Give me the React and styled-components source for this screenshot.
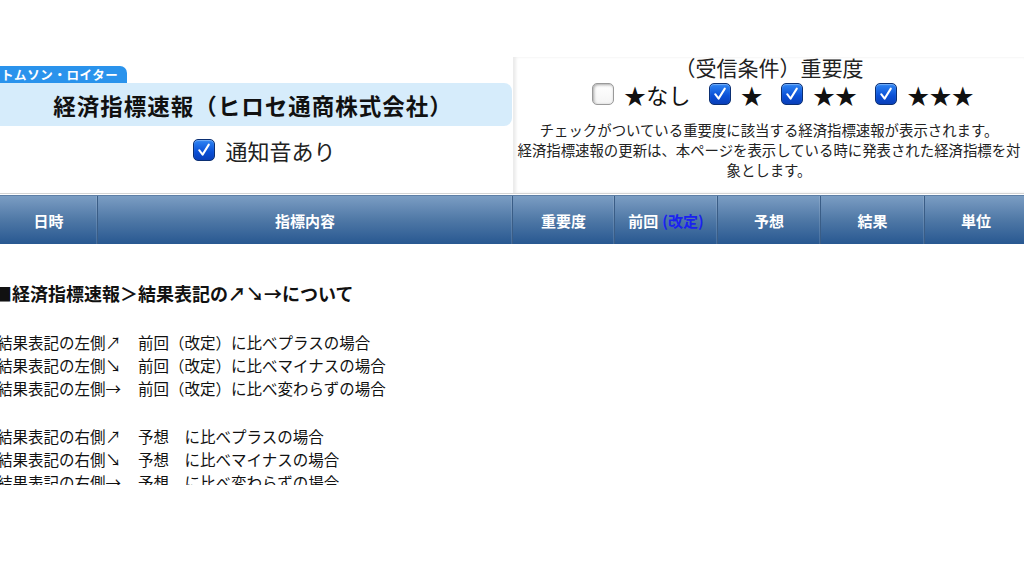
import React from 'react'
import styled, { createGlobalStyle } from 'styled-components'

const GlobalStyle = createGlobalStyle`
  html, body {
    margin: 0;
    padding: 0;
    background: #ffffff;
  }
  body {
    font-family: "Noto Sans CJK JP", "Noto Sans", sans-serif;
    color: #111;
  }
`;

const Check = ({ checked }) => (
  <CheckBox checked={checked}>
    {checked && (
      <svg width="16" height="16" viewBox="0 0 16 16">
        <path d="M3.2 8.2 L6.6 12.6 L12.8 2.6" fill="none" stroke="#fff" strokeWidth="2" strokeLinecap="round" strokeLinejoin="round" />
      </svg>
    )}
  </CheckBox>
)

const columns = [
  { label: '日時', width: 98 },
  { label: '指標内容', width: 415 },
  { label: '重要度', width: 102 },
  { label: '前回', extra: '(改定)', width: 103 },
  { label: '予想', width: 103 },
  { label: '結果', width: 104 },
  { label: '単位', width: 103 },
]

const helpLines = [
  'チェックがついている重要度に該当する経済指標速報が表示されます。',
  '経済指標速報の更新は、本ページを表示している時に発表された経済指標を対',
  '象とします。',
]

const notes = [
  ['結果表記の左側↗', '前回（改定）に比べプラスの場合'],
  ['結果表記の左側↘', '前回（改定）に比べマイナスの場合'],
  ['結果表記の左側→', '前回（改定）に比べ変わらずの場合'],
  null,
  ['結果表記の右側↗', '予想　に比べプラスの場合'],
  ['結果表記の右側↘', '予想　に比べマイナスの場合'],
  ['結果表記の右側→', '予想　に比べ変わらずの場合'],
]

const App = () => {
  return (
    <>
      <GlobalStyle />
      <Page>
        <Top>
          <LeftPanel>
            <Badge>トムソン・ロイター</Badge>
            <TitleBar>経済指標速報（ヒロセ通商株式会社）</TitleBar>
            <OptionRow>
              <Check checked />
              <span>通知音あり</span>
            </OptionRow>
          </LeftPanel>
          <RightPanel>
            <Heading2>（受信条件）重要度</Heading2>
            <LevelRow>
              <Level><Check /><span>★なし</span></Level>
              <Level><Check checked /><span>★</span></Level>
              <Level><Check checked /><span>★★</span></Level>
              <Level><Check checked /><span>★★★</span></Level>
            </LevelRow>
            <Help>
              {helpLines.map((l) => (
                <HelpLine key={l}>{l}</HelpLine>
              ))}
            </Help>
          </RightPanel>
        </Top>
        <HeaderRow>
          {columns.map((c) => (
            <HeaderCell key={c.label} w={c.width}>
              {c.label}
              {c.extra && <Revised>{c.extra}</Revised>}
            </HeaderCell>
          ))}
        </HeaderRow>
        <Notes>
          <NotesTitle>■経済指標速報＞結果表記の↗↘→について</NotesTitle>
          {notes.map((n, i) =>
            n ? (
              <NoteLine key={i}>
                <NoteKey>{n[0]}</NoteKey>
                <span>{n[1]}</span>
              </NoteLine>
            ) : (
              <NoteGap key={i} />
            )
          )}
        </Notes>
      </Page>
    </>
  )
}

export default App

const Page = styled.div`
  margin-top: 57px;
  width: 1024px;
  height: 428px;
  overflow: hidden;
`;

const Top = styled.div`
  display: flex;
  height: 136px;
  border-bottom: 1px solid #d4d4d4;
`;

const LeftPanel = styled.div`
  width: 513px;
  display: flex;
  flex-direction: column;
  align-items: flex-start;
  padding-top: 9px;
`;

const Badge = styled.div`
  background: #2a93ec;
  color: #fff;
  font-size: 12.5px;
  font-weight: 700;
  line-height: 17px;
  height: 17px;
  padding: 0 9px 0 1px;
  border-radius: 0 7px 0 0;
  letter-spacing: 0.6px;
`;

const TitleBar = styled.div`
  width: 512px;
  height: 43px;
  background: #d6ecfb;
  border-radius: 0 8px 8px 0;
  display: flex;
  align-items: center;
  justify-content: center;
  font-size: 22.5px;
  font-weight: 700;
  letter-spacing: 1px;
  padding-right: 6px;
  box-sizing: border-box;
`;

const OptionRow = styled.div`
  align-self: stretch;
  display: flex;
  align-items: center;
  justify-content: center;
  gap: 10px;
  margin-top: 8px;
  padding-left: 16px;
  font-size: 22px;
  color: #222;
`;

const CheckBox = styled.span`
  display: inline-flex;
  align-items: center;
  justify-content: center;
  width: 22px;
  height: 22px;
  box-sizing: border-box;
  border-radius: 5px;
  flex-shrink: 0;
  border: 1px solid ${(p) => (p.checked ? '#0b2f73' : '#9a9a9a')};
  background: ${(p) =>
    p.checked
      ? 'linear-gradient(#2f86f5, #0a4fd6 60%, #0a3fb8)'
      : 'linear-gradient(#ffffff, #f4f4f4)'};
  box-shadow: ${(p) =>
    p.checked
      ? 'inset 0 1px 1px rgba(255,255,255,0.35)'
      : 'inset 1px 1px 3px rgba(0,0,0,0.35)'};
`;

const RightPanel = styled.div`
  flex: 1;
  display: flex;
  flex-direction: column;
  align-items: center;
  box-shadow: inset 2px 0 3px rgba(0, 0, 0, 0.08);
  border-left: 1px solid #ececec;
  overflow: hidden;
`;

const Heading2 = styled.div`
  font-size: 21px;
  line-height: 24px;
  margin-top: -2px;
  color: #222;
`;

const LevelRow = styled.div`
  display: flex;
  align-items: center;
  gap: 18px;
  margin-top: 1px;
  margin-left: 28px;
  font-size: 22px;
  line-height: 28px;
`;

const Level = styled.div`
  display: flex;
  align-items: center;
  gap: 10px;
  letter-spacing: 0.2px;
`;

const Help = styled.div`
  margin-top: 12px;
  display: flex;
  flex-direction: column;
  align-items: center;
  font-size: 14.4px;
  line-height: 20px;
  color: #222;
`;

const HelpLine = styled.div`
  white-space: nowrap;
`;

const HeaderRow = styled.div`
  display: flex;
  height: 48px;
  margin-top: 1px;
  background: linear-gradient(#7b9dc3, #4f78a6 50%, #285891);
  border-top: 1px solid #5d7fa6;
`;

const HeaderCell = styled.div`
  width: ${(p) => p.w}px;
  flex-shrink: 0;
  display: flex;
  align-items: center;
  justify-content: center;
  color: #fff;
  font-size: 15px;
  font-weight: 700;
  box-sizing: border-box;
  border-right: 1px solid #3a5d86;
  box-shadow: inset -1px 0 0 rgba(255, 255, 255, 0.12);
`;

const Revised = styled.span`
  color: #1a22f0;
  margin-left: 4px;
`;

const Notes = styled.div`
  margin-top: 38px;
  margin-left: -3px;
  font-size: 15.5px;
  line-height: 23px;
  color: #111;
`;

const NotesTitle = styled.div`
  font-size: 18px;
  font-weight: 700;
  margin-left: -3px;
  margin-bottom: 26px;
`;

const NoteLine = styled.div`
  display: flex;
`;

const NoteKey = styled.span`
  width: 141px;
  flex-shrink: 0;
`;

const NoteGap = styled.div`
  height: 25px;
`;
